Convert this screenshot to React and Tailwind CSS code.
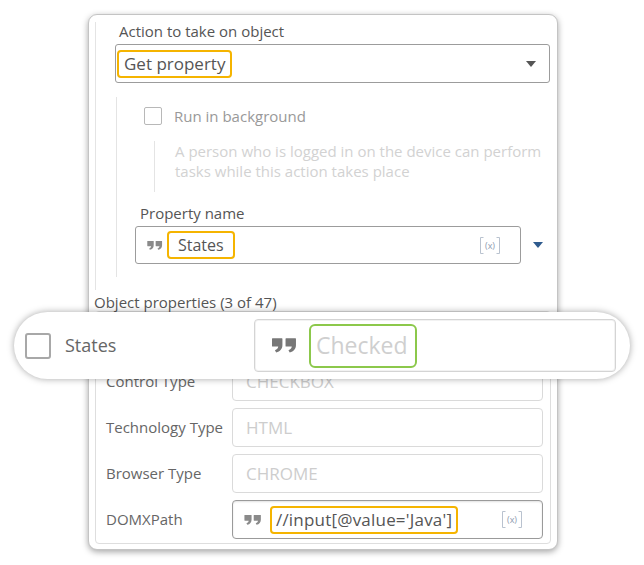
import React from 'react'

// closing-quote glyph used in the "text" inputs
function Quote({ className }) {
  return (
    <svg viewBox="0 0 24 14" className={className} fill="currentColor">
      <path d="M0 .5C0 .2.2 0 .5 0h9c.3 0 .5.2.5.5v6c0 3.8-2.2 6.2-6 7.3l-1.2-2.2c2-.8 3-2 3.2-3.6H.5C.2 8 0 7.8 0 7.5z" />
      <path d="M13 .5c0-.3.2-.5.5-.5h9c.3 0 .5.2.5.5v6c0 3.8-2.2 6.2-6 7.3l-1.2-2.2c2-.8 3-2 3.2-3.6h-5.5c-.3 0-.5-.2-.5-.5z" />
    </svg>
  )
}

function VarIcon() {
  return (
    <span className="relative flex h-[17px] w-[20px] items-center justify-center text-[9px] leading-none text-[#8d9bb0]">
      <svg className="absolute inset-0" viewBox="0 0 20 17" fill="none" stroke="#b9c2cf" strokeWidth="1">
        <path d="M3.5 .5H.5v16h3M16.5 .5h3v16h-3" />
      </svg>
      (x)
    </span>
  )
}

function Caret({ className }) {
  return (
    <svg viewBox="0 0 10 6" className={className} fill="currentColor">
      <path d="M0 0h10L5 6z" />
    </svg>
  )
}

const rows = [
  ['', ''],
  ['Control Type', 'CHECKBOX'],
  ['Technology Type', 'HTML'],
  ['Browser Type', 'CHROME'],
]

export default function App() {
  return (
    <div className="relative h-[565px] w-[644px] overflow-hidden bg-white font-['Open_Sans',sans-serif] text-[#5a5a5a]">
      {/* main panel */}
      <div className="ml-[88px] mt-[14px] w-[470px] rounded-[9px] border border-[#c4c4c4] bg-white pb-[5px] shadow-[0_2px_6px_rgba(0,0,0,0.35)]">
        <div className="ml-[6px] mt-[7px] border-l border-[#e4e4e4] pb-[13px] pl-[19px]">
          <div className="ml-[4px] text-[15px] leading-[18px] text-[#555]">Action to take on object</div>
          <div className="mt-[4px] flex h-[39px] w-[435px] items-center justify-between rounded-[3px] border border-[#9c9c9c] pl-[1px] pr-[13px]">
            <span className="flex h-[28px] items-center rounded-[4px] border-2 border-[#f5b400] px-[5px] text-[17px] text-[#555]">
              Get property
            </span>
            <Caret className="h-[6px] w-[10px] text-[#555]" />
          </div>

          <div className="ml-[1px] mt-[14px] border-l border-[#e4e4e4] pb-[13px] pt-[10px]">
            <div className="ml-[27px] flex items-center gap-[12px]">
              <span className="h-[18px] w-[18px] rounded-[2px] border-[1.5px] border-[#b8b8b8]" />
              <span className="text-[15px] leading-[18px] text-[#999]">Run in background</span>
            </div>
            <div className="ml-[37px] mt-[16px] h-[51px] border-l border-[#e4e4e4] pl-[20px] text-[15px] leading-[20px] text-[#d2d2d2]">
              A person who is logged in on the device can perform
              <br />
              tasks while this action takes place
            </div>

            <div className="ml-[23px] mt-[12px] text-[15px] leading-[18px] text-[#555]">Property name</div>
            <div className="ml-[18px] mt-[4px] flex items-center">
              <div className="flex h-[38px] w-[386px] items-center rounded-[3px] border border-[#9c9c9c] pl-[11px] pr-[20px]">
                <Quote className="h-[9px] w-[16px] text-[#8a8a8a]" />
                <span className="ml-[4px] flex h-[28px] items-center rounded-[4px] border-2 border-[#f5b400] px-[9px] text-[16px] text-[#555]">
                  States
                </span>
                <span className="ml-auto">
                  <VarIcon />
                </span>
              </div>
              <Caret className="ml-[12px] h-[6px] w-[10px] text-[#2f5b8e]" />
            </div>
          </div>
        </div>

        <div className="ml-[5px] mt-[4px] text-[15px] leading-[17px] text-[#555]">Object properties (3 of 47)</div>

        <div className="ml-[6px] flex w-[456px] flex-col gap-[7px] rounded-[4px] border border-[#dedede] pb-[4px] pl-[10px] pt-[4px]">
          {rows.map(([label, value], i) => (
            <div key={i} className="flex items-center">
              <span className="w-[126px] text-[15px] text-[#666]">{label}</span>
              <div className="flex h-[39px] w-[311px] items-center rounded-[4px] border border-[#dadada] px-[13px] text-[17px] text-[#cdcdcd]">
                {value}
              </div>
            </div>
          ))}
          <div className="flex items-center">
            <span className="w-[126px] text-[15px] text-[#666]">DOMXPath</span>
            <div className="flex h-[39px] w-[311px] items-center rounded-[4px] border border-[#9a9a9a] pl-[11px] pr-[20px] shadow-[inset_0_1px_2px_rgba(0,0,0,0.12)]">
              <Quote className="h-[10px] w-[18px] text-[#8a8a8a]" />
              <span className="ml-[8px] flex h-[28px] items-center rounded-[4px] border-2 border-[#f5b400] px-[4px] text-[17px] tracking-[0.2px] text-[#555]">
                //input[@value='Java']
              </span>
              <span className="ml-auto">
                <VarIcon />
              </span>
            </div>
          </div>
        </div>
      </div>

      {/* magnified "States" row */}
      <div className="absolute left-[14px] top-[312px] flex h-[67px] w-[616px] items-center rounded-full bg-white pl-[11px] shadow-[0_0_7px_rgba(0,0,0,0.35)]">
        <span className="h-[26px] w-[26px] rounded-[3px] border-2 border-[#a8a8a8]" />
        <span className="ml-[14px] w-[189px] text-[18px] text-[#666]">States</span>
        <div className="flex h-[53px] w-[362px] items-center rounded-[4px] border border-[#d4d4d4] pl-[17px] shadow-[inset_0_0_0_1px_#f2f2f2]">
          <Quote className="h-[15px] w-[25px] text-[#777]" />
          <span className="ml-[12px] flex h-[44px] w-[108px] items-center rounded-[6px] border-2 border-[#8cc84b] pl-[5px] text-[23px] text-[#cfcfcf]">
            Checked
          </span>
        </div>
      </div>
    </div>
  )
}
